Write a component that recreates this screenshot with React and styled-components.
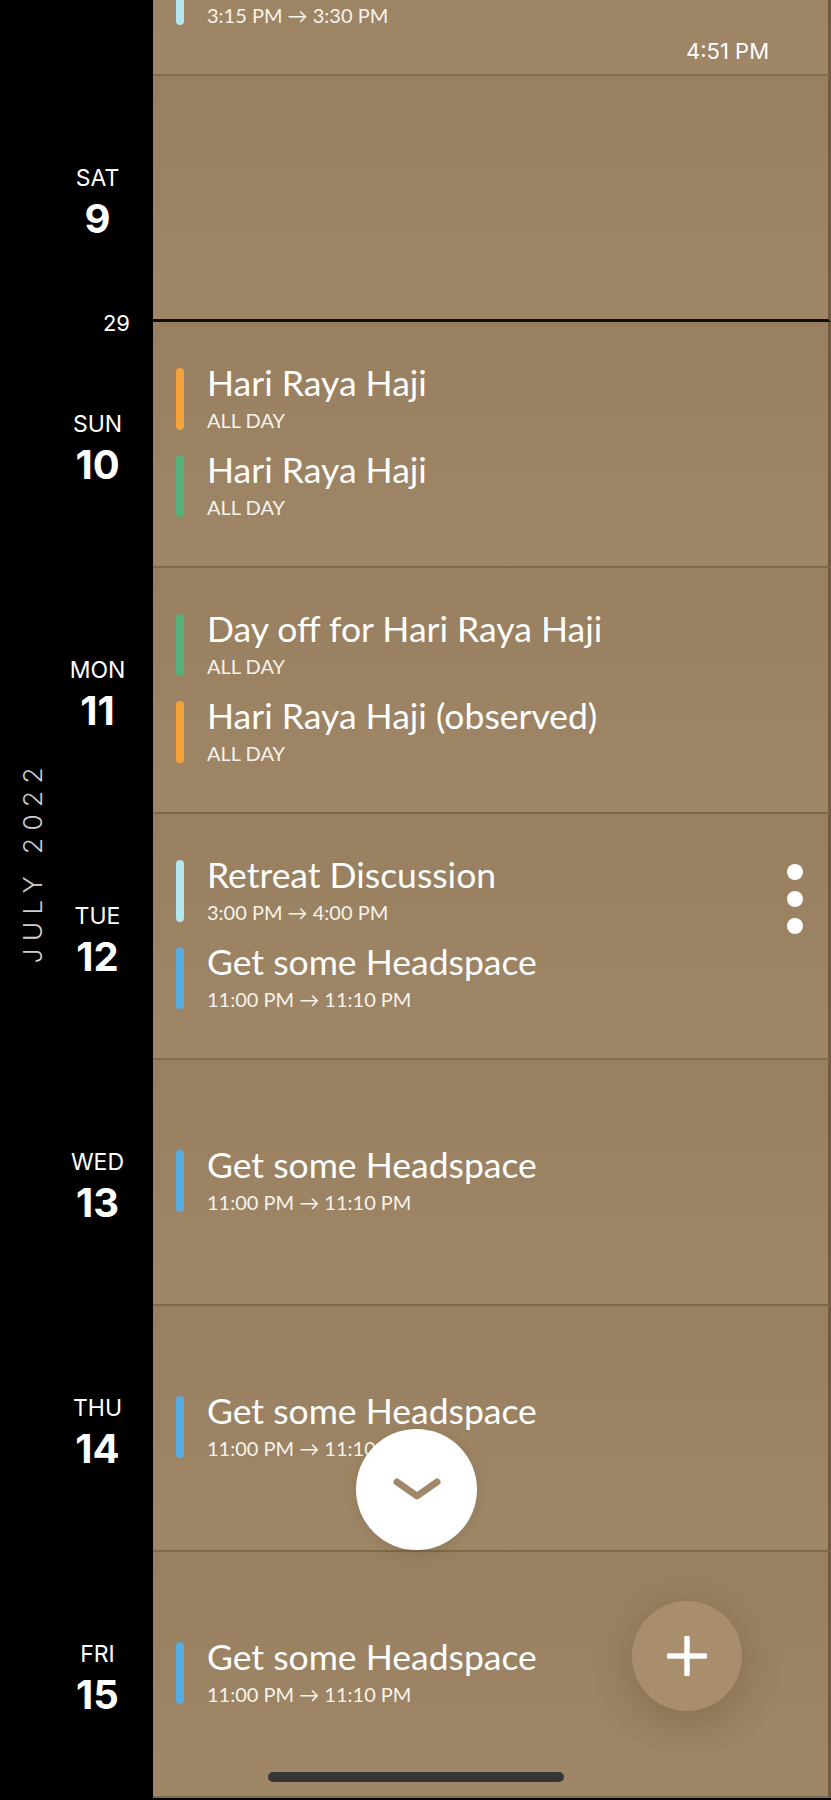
import React from "react";
import styled, { createGlobalStyle } from "styled-components";

const GlobalStyle = createGlobalStyle`
  html, body {
    margin: 0;
    padding: 0;
    background: #000;
  }
  * {
    box-sizing: border-box;
  }
`;

const days = [
  {
    dow: "FRI",
    day: 8,
    now: "4:51 PM",
    events: [
      { title: "Weekly Sync", sub: "10:00 AM → 10:30 AM", color: "#56ade2" },
      { title: "Quick Call", sub: "3:15 PM → 3:30 PM", color: "#b3e5ee" },
    ],
  },
  { dow: "SAT", day: 9, week: 29, events: [] },
  {
    dow: "SUN",
    day: 10,
    events: [
      { title: "Hari Raya Haji", sub: "ALL DAY", color: "#f7a33b" },
      { title: "Hari Raya Haji", sub: "ALL DAY", color: "#52b27a" },
    ],
  },
  {
    dow: "MON",
    day: 11,
    events: [
      { title: "Day off for Hari Raya Haji", sub: "ALL DAY", color: "#52b27a" },
      { title: "Hari Raya Haji (observed)", sub: "ALL DAY", color: "#f7a33b" },
    ],
  },
  {
    dow: "TUE",
    day: 12,
    events: [
      { title: "Retreat Discussion", sub: "3:00 PM → 4:00 PM", color: "#b3e5ee", more: true },
      { title: "Get some Headspace", sub: "11:00 PM → 11:10 PM", color: "#56ade2" },
    ],
  },
  {
    dow: "WED",
    day: 13,
    events: [{ title: "Get some Headspace", sub: "11:00 PM → 11:10 PM", color: "#56ade2" }],
  },
  {
    dow: "THU",
    day: 14,
    events: [{ title: "Get some Headspace", sub: "11:00 PM → 11:10 PM", color: "#56ade2" }],
  },
  {
    dow: "FRI",
    day: 15,
    events: [{ title: "Get some Headspace", sub: "11:00 PM → 11:10 PM", color: "#56ade2" }],
  },
];

function App() {
  return (
    <Screen>
      <GlobalStyle />
      <Agenda>
        {days.map((d) => (
          <DayRow key={d.day}>
            <DayCell>
              <Dow>{d.dow}</Dow>
              <DayNum>{d.day}</DayNum>
              {d.week && <WeekNum>{d.week}</WeekNum>}
            </DayCell>
            <Events weekEnd={!!d.week}>
              {d.events.map((e, i) => (
                <Event key={i}>
                  <Bar color={e.color} />
                  <EventText>
                    <Title>{e.title}</Title>
                    <Sub>{e.sub}</Sub>
                  </EventText>
                  {e.more && (
                    <More>
                      <Dot />
                      <Dot />
                      <Dot />
                    </More>
                  )}
                </Event>
              ))}
              {d.now && <NowLabel>{d.now}</NowLabel>}
            </Events>
          </DayRow>
        ))}
      </Agenda>

      <MonthLabel>JULY 2022</MonthLabel>

      <JumpButton>
        <svg width="48" height="24" viewBox="0 0 48 24">
          <path
            d="M4 4 L24 18 L44 4"
            fill="none"
            stroke="#a08868"
            strokeWidth="7"
            strokeLinecap="round"
            strokeLinejoin="round"
          />
        </svg>
      </JumpButton>

      <AddButton>
        <svg width="40" height="40" viewBox="0 0 40 40">
          <path d="M20 2 V38 M2 20 H38" stroke="#fff" strokeWidth="5.5" strokeLinecap="round" />
        </svg>
      </AddButton>

      <HomeBar />
    </Screen>
  );
}

const Screen = styled.div`
  position: relative;
  width: 831px;
  height: 1800px;
  overflow: hidden;
  background: #000;
`;

const Agenda = styled.div`
  margin-top: -170px;
`;

const DayRow = styled.div`
  display: grid;
  grid-template-columns: 153px 1fr;
  height: 246px;
`;

const DayCell = styled.div`
  position: relative;
  background: #000;
  padding: 7px 0 0 42px;
  display: flex;
  flex-direction: column;
  align-items: center;
  justify-content: center;
  color: #fff;
  font-family: Inter, "Liberation Sans", sans-serif;
`;

const Dow = styled.div`
  font-size: 23px;
  line-height: 26px;
  font-weight: 400;
`;

const DayNum = styled.div`
  font-size: 40px;
  line-height: 44px;
  font-weight: 700;
  margin-top: 6px;
`;

const WeekNum = styled.div`
  position: absolute;
  z-index: 2;
  right: 23px;
  bottom: -14px;
  font-size: 22px;
  line-height: 26px;
  color: #fff;
`;

const Events = styled.div`
  position: relative;
  display: flex;
  flex-direction: column;
  justify-content: center;
  gap: 25px;
  padding: 0 25px 3px 23px;
  background: linear-gradient(#977f5f, #9e8666);
  border-bottom: ${(p) => (p.weekEnd ? "3px solid #0d0d0d" : "2px solid #7e6949")};
  border-right: 3px solid #6f5b40;
`;

const Event = styled.div`
  display: flex;
  align-items: stretch;
  gap: 23px;
`;

const Bar = styled.div`
  width: 8px;
  border-radius: 4px;
  background: ${(p) => p.color};
`;

const EventText = styled.div`
  display: flex;
  flex-direction: column;
  color: #fff;
  font-family: Lato, "Open Sans", sans-serif;
`;

const Title = styled.div`
  font-size: 35.5px;
  line-height: 30px;
  font-weight: 400;
  white-space: nowrap;
`;

const Sub = styled.div`
  margin-top: 12px;
  font-size: 20px;
  line-height: 20px;
  color: #f7f3ec;
  white-space: nowrap;
`;

const More = styled.div`
  margin: 4px 0 -12px auto;
  display: flex;
  flex-direction: column;
  gap: 11px;
`;

const Dot = styled.span`
  width: 16px;
  height: 16px;
  border-radius: 50%;
  background: #fff;
`;

const NowLabel = styled.div`
  position: absolute;
  right: 59px;
  bottom: 10px;
  font-family: Inter, "Liberation Sans", sans-serif;
  font-size: 22px;
  color: #fff;
`;

const MonthLabel = styled.div`
  position: absolute;
  left: 17px;
  top: 760px;
  writing-mode: vertical-rl;
  transform: rotate(180deg);
  font-family: Inter, "Liberation Sans", sans-serif;
  font-weight: 300;
  font-size: 26px;
  letter-spacing: 7.5px;
  color: #cfcfcf;
`;

const JumpButton = styled.button`
  position: absolute;
  left: 356px;
  top: 1429px;
  width: 121px;
  height: 121px;
  border: none;
  border-radius: 50%;
  background: #fff;
  display: flex;
  align-items: center;
  justify-content: center;
  padding: 0;
  box-shadow: 0 4px 14px rgba(0, 0, 0, 0.08);
`;

const AddButton = styled.button`
  position: absolute;
  right: 89px;
  bottom: 89px;
  width: 110px;
  height: 110px;
  border: none;
  border-radius: 50%;
  background: #a98e6d;
  display: flex;
  align-items: center;
  justify-content: center;
  padding: 0;
  box-shadow: 0 12px 40px rgba(60, 40, 15, 0.22);
`;

const HomeBar = styled.div`
  position: absolute;
  left: 50%;
  bottom: 18px;
  width: 296px;
  height: 10px;
  margin-left: -148px;
  border-radius: 5px;
  background: #363636;
`;

export default App;
